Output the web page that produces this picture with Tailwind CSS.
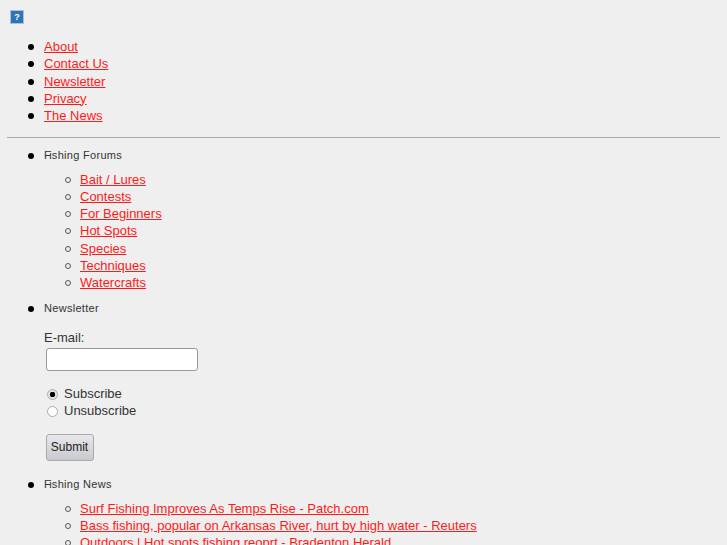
<!DOCTYPE html>
<html lang="en">
<head>
    <meta charset="UTF-8">
    <title>Fishing</title>
    <script src="https://cdn.jsdelivr.net/npm/@tailwindcss/browser@4"></script>
</head>
<body class="h-[545px] overflow-hidden bg-[#efefef] px-[7px] pt-[10px] text-[13px] leading-[17.25px] text-[#333] font-['Liberation_Sans',Arial,sans-serif]">

    <!-- broken image placeholder -->
    <div class="ml-[3px] h-[14px] w-[14px] border border-[#a9c0dc] bg-[#2f74b5] text-center text-[9px] leading-[12px] font-bold text-white">?</div>

    <!-- top nav -->
    <ul class="mt-[14px] list-none pl-[37px] [&>li]:relative [&>li]:before:absolute [&>li]:before:top-[6px] [&>li]:before:left-[-16px] [&>li]:before:size-[6px] [&>li]:before:rounded-full [&>li]:before:bg-black">
        <li><a href="#" class="text-[#ff1a1a] underline">About</a></li>
        <li><a href="#" class="text-[#ff1a1a] underline">Contact Us</a></li>
        <li><a href="#" class="text-[#ff1a1a] underline">Newsletter</a></li>
        <li><a href="#" class="text-[#ff1a1a] underline">Privacy</a></li>
        <li><a href="#" class="text-[#ff1a1a] underline">The News</a></li>
    </ul>

    <hr class="mt-[13px] border-t border-[#aaa]">

    <ul class="mt-[9px] list-none pl-[37px] [&>li]:relative [&>li]:before:absolute [&>li]:before:top-[6px] [&>li]:before:left-[-16px] [&>li]:before:size-[6px] [&>li]:before:rounded-full [&>li]:before:bg-black">
        <li>
            <h3 class="text-[11px] tracking-[0.3px] text-[#333]"><span class="tracking-[-1.6px]">F</span>ishing Forums</h3>
            <ul class="mt-[6px] list-none pl-[36px] [&>li]:relative [&>li]:before:absolute [&>li]:before:top-[6px] [&>li]:before:left-[-15px] [&>li]:before:size-[6px] [&>li]:before:rounded-full [&>li]:before:border-[1.5px] [&>li]:before:border-[#555]">
                <li><a href="#" class="text-[#ff1a1a] underline">Bait / Lures</a></li>
                <li><a href="#" class="text-[#ff1a1a] underline">Contests</a></li>
                <li><a href="#" class="text-[#ff1a1a] underline">For Beginners</a></li>
                <li><a href="#" class="text-[#ff1a1a] underline">Hot Spots</a></li>
                <li><a href="#" class="text-[#ff1a1a] underline">Species</a></li>
                <li><a href="#" class="text-[#ff1a1a] underline">Techniques</a></li>
                <li><a href="#" class="text-[#ff1a1a] underline">Watercrafts</a></li>
            </ul>
        </li>
        <li class="mt-[9px]">
            <h3 class="text-[11px] tracking-[0.3px] text-[#333]">Newsletter</h3>
            <form class="mt-[11px] text-[#333]">
                <label class="block">E-mail:</label>
                <input type="text" class="mt-[2px] ml-[1.5px] block h-[23px] w-[152px] rounded-[3px] border border-[#999] bg-white">
                <div class="mt-[14px] flex items-center">
                    <input type="radio" name="sub" checked class="mx-[3px] mt-[2px] h-[11px] w-[11px] appearance-none rounded-full border border-[#aaa] bg-white checked:bg-[radial-gradient(circle,#000_0,#000_38%,#e4e4e4_48%)]">
                    <span class="ml-[3px]">Subscribe</span>
                </div>
                <div class="flex items-center">
                    <input type="radio" name="sub" class="mx-[3px] mt-[2px] h-[11px] w-[11px] appearance-none rounded-full border border-[#aaa] bg-white">
                    <span class="ml-[3px]">Unsubscribe</span>
                </div>
                <button type="button" class="mt-[15px] ml-[1.5px] block h-[27px] w-[48px] rounded-[3px] border border-[#aaa] bg-gradient-to-b from-[#e8e8ec] to-[#c8c9ce] text-[12px] text-[#222]">Submit</button>
            </form>
        </li>
        <li class="mt-[15px]">
            <h3 class="text-[11px] tracking-[0.3px] text-[#333]"><span class="tracking-[-1.6px]">F</span>ishing News</h3>
            <ul class="mt-[6px] list-none pl-[36px] [&>li]:relative [&>li]:before:absolute [&>li]:before:top-[6px] [&>li]:before:left-[-15px] [&>li]:before:size-[6px] [&>li]:before:rounded-full [&>li]:before:border-[1.5px] [&>li]:before:border-[#555]">
                <li><a href="#" class="text-[#ff1a1a] underline">Surf Fishing Improves As Temps Rise - Patch.com</a></li>
                <li><a href="#" class="text-[#ff1a1a] underline">Bass fishing, popular on Arkansas River, hurt by high water - Reuters</a></li>
                <li><a href="#" class="text-[#ff1a1a] underline">Outdoors | Hot spots fishing reoprt - Bradenton Herald</a></li>
            </ul>
        </li>
    </ul>

</body>
</html>
